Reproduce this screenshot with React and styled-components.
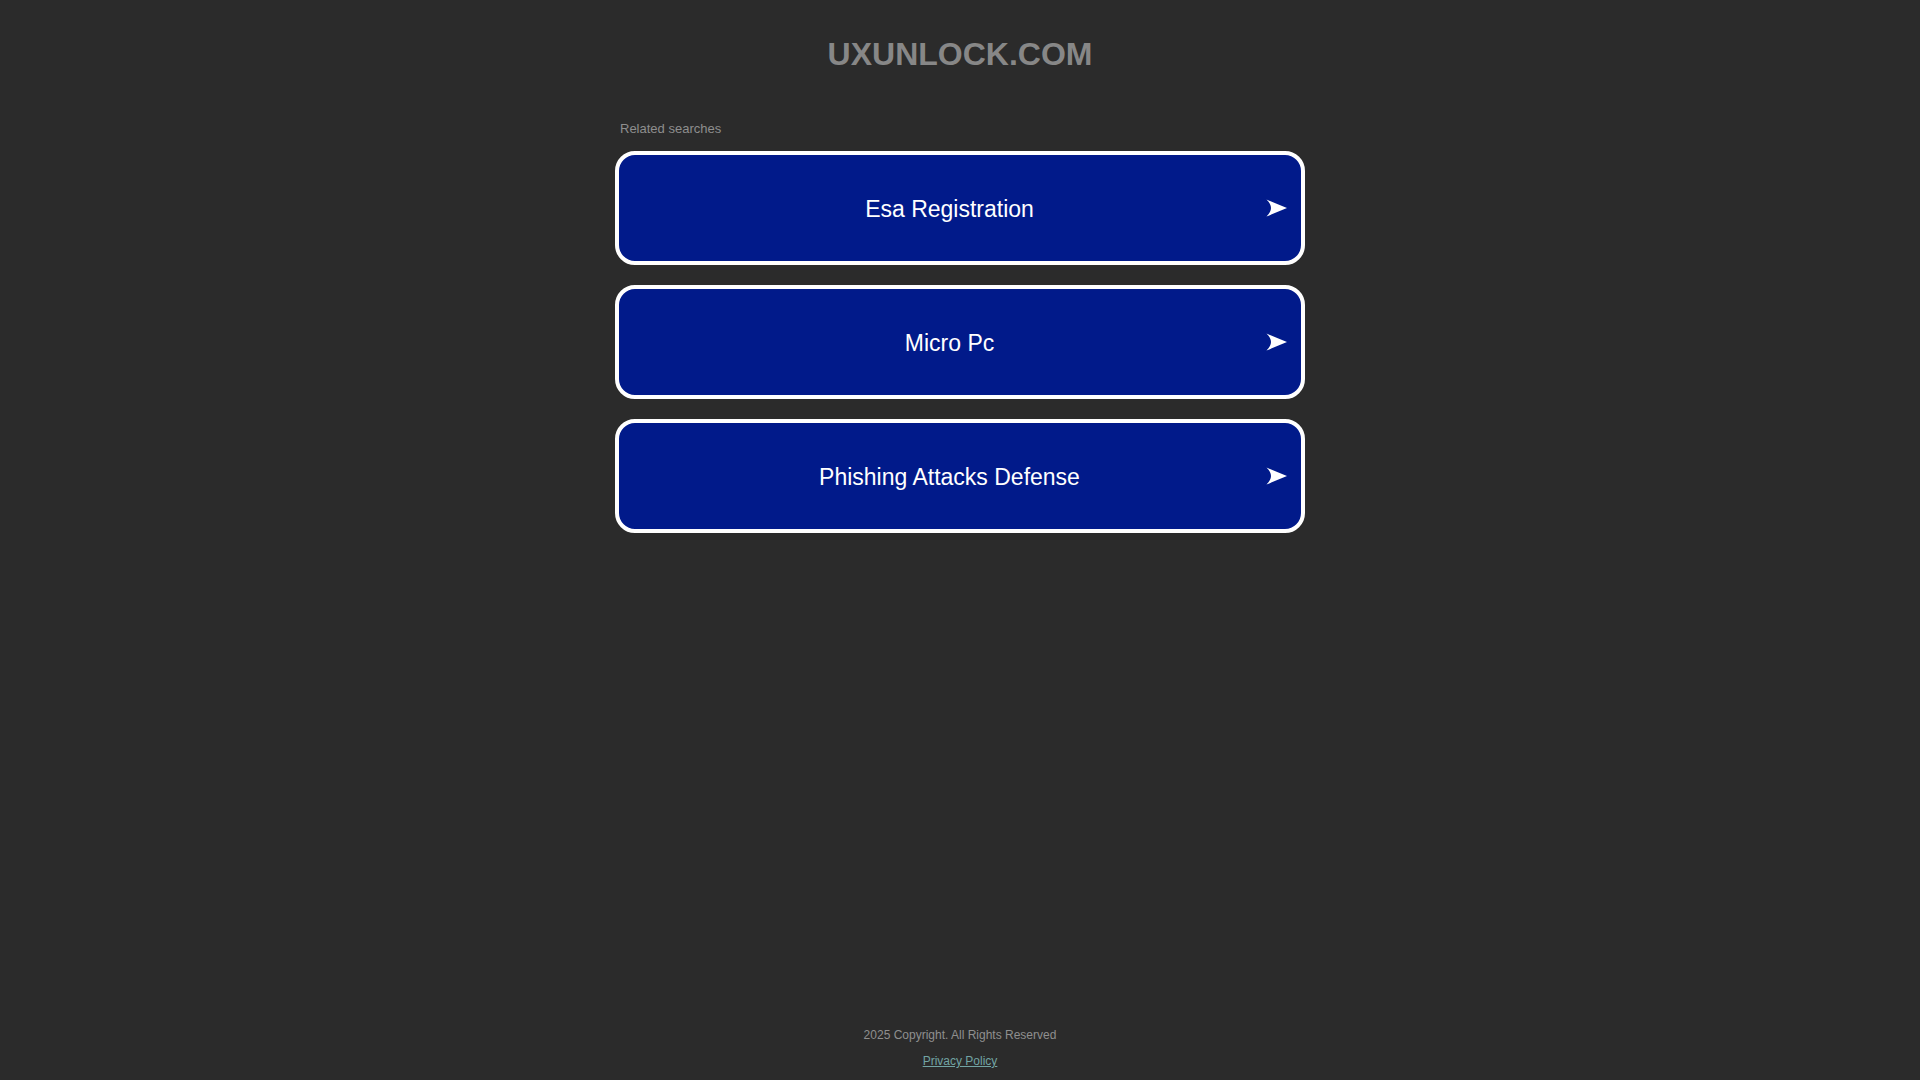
import React from 'react'
import styled, { createGlobalStyle } from 'styled-components'

const GlobalStyle = createGlobalStyle`
    html, body {
        margin: 0;
        padding: 0;
        background: #2b2b2b;
        font-family: "Liberation Sans", Arial, sans-serif;
    }
    * {
        box-sizing: border-box;
    }
`

const Page = styled.div`
    min-height: 100vh;
    display: flex;
    flex-direction: column;
    align-items: center;
`

const Title = styled.h1`
    margin: 34px 0 0;
    font-size: 32px;
    line-height: 40px;
    font-weight: bold;
    color: #878787;
    text-align: center;
`

const Content = styled.main`
    width: 690px;
    margin-top: 47px;
    display: flex;
    flex-direction: column;
`

const Label = styled.div`
    font-size: 13px;
    line-height: 16px;
    color: #8e8e8e;
    padding-left: 5px;
    margin-bottom: 14px;
`

const List = styled.div`
    display: flex;
    flex-direction: column;
    gap: 20px;
`

const Card = styled.a`
    height: 114px;
    display: flex;
    align-items: center;
    padding: 0 14px;
    background: #011a8a;
    border: 4px solid #ffffff;
    border-radius: 20px;
    color: #ffffff;
    text-decoration: none;
    cursor: pointer;
`

const CardText = styled.span`
    flex: 1;
    text-align: center;
    font-size: 23px;
    line-height: 28px;
    padding-top: 1px;
`

const Arrow = styled.svg`
    width: 21px;
    height: 18px;
    flex-shrink: 0;
`

const Footer = styled.footer`
    margin-top: auto;
    padding-bottom: 12px;
    display: flex;
    flex-direction: column;
    align-items: center;
    gap: 12px;
    font-size: 12px;
    line-height: 14px;
`

const Copy = styled.div`
    color: #8f8f8f;
`

const PolicyLink = styled.a`
    color: #72a4a4;
    text-decoration: underline;
`

const searches = ['Esa Registration', 'Micro Pc', 'Phishing Attacks Defense']

function ArrowIcon() {
    return (
        <Arrow viewBox="0 0 21 18">
            <path d="M0.5 0.5 Q10 4.5 21 9 Q10 13.5 0.5 17.5 Q5 13 5 9 Q5 5 0.5 0.5 Z" fill="#ffffff" />
        </Arrow>
    )
}

export default function App() {
    return (
        <>
            <GlobalStyle />
            <Page>
                <Title>UXUNLOCK.COM</Title>
                <Content>
                    <Label>Related searches</Label>
                    <List>
                        {searches.map(item => (
                            <Card key={item}>
                                <CardText>{item}</CardText>
                                <ArrowIcon />
                            </Card>
                        ))}
                    </List>
                </Content>
                <Footer>
                    <Copy>2025 Copyright. All Rights Reserved</Copy>
                    <PolicyLink href="#">Privacy Policy</PolicyLink>
                </Footer>
            </Page>
        </>
    )
}
